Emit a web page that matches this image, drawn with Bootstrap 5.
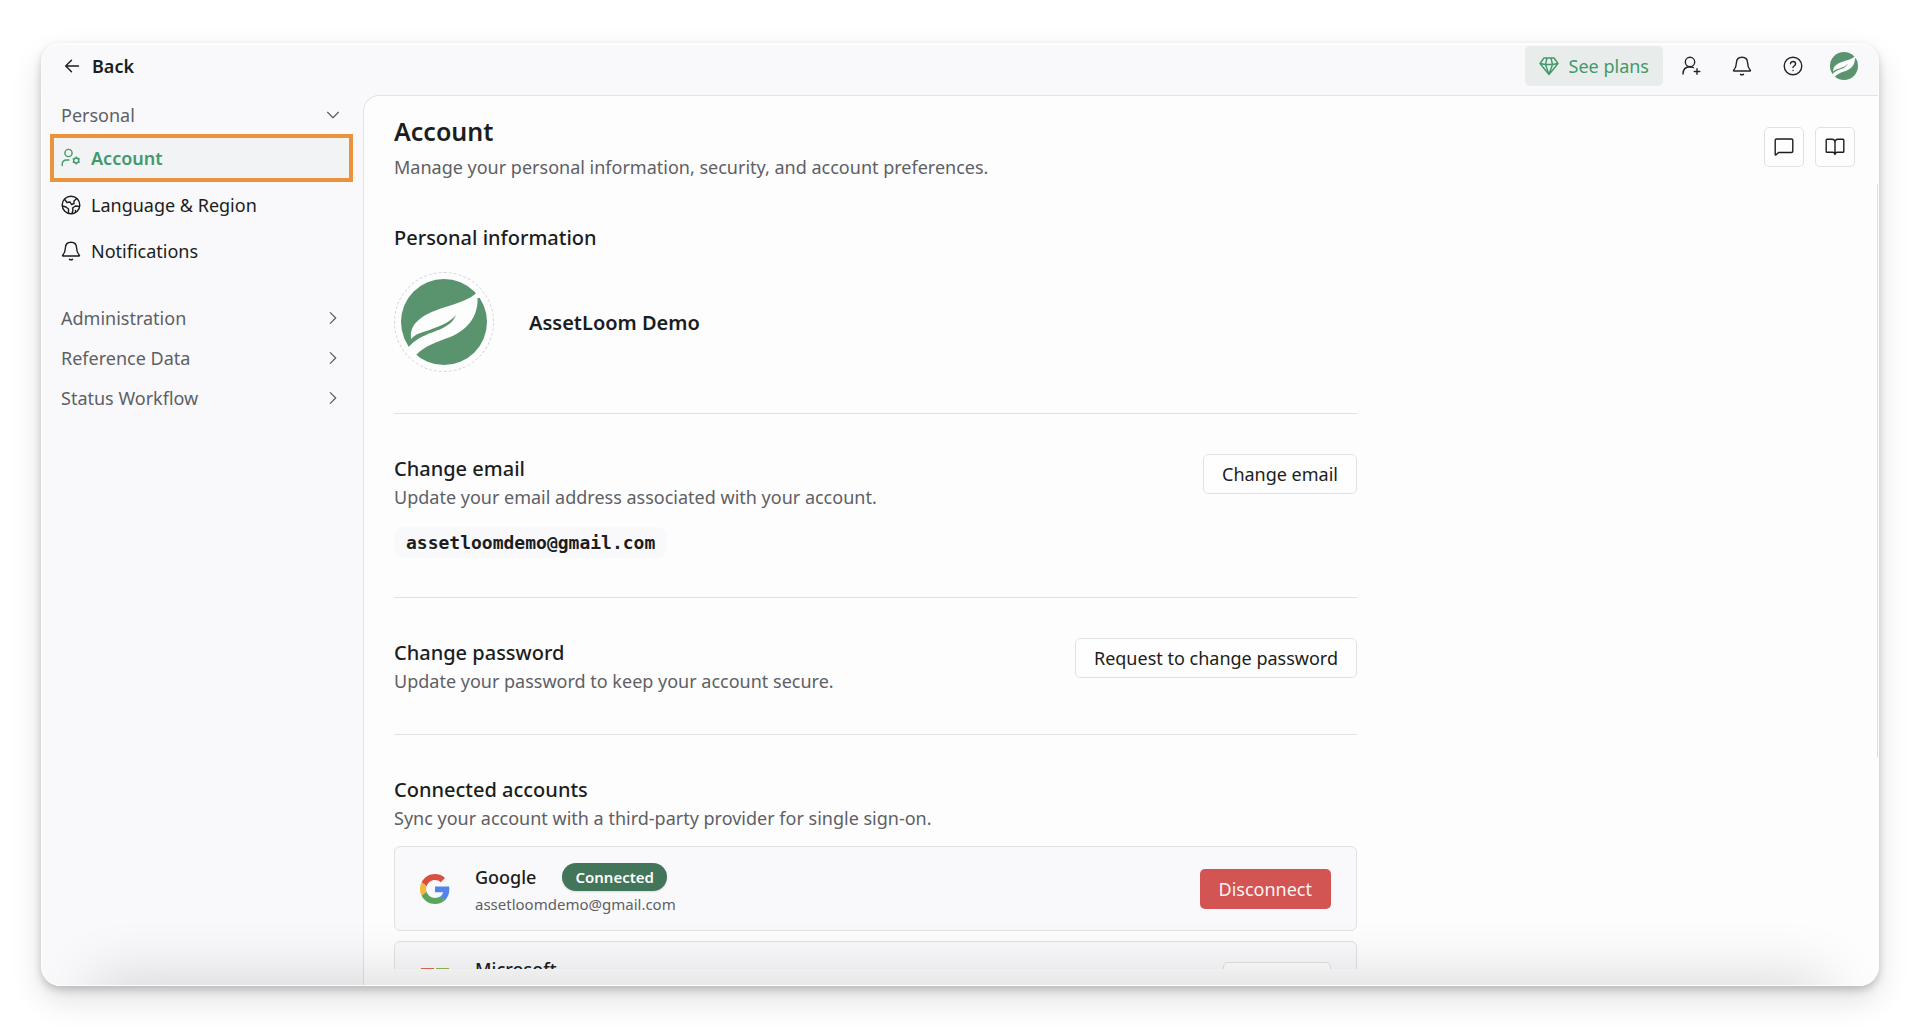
<!DOCTYPE html>
<html lang="en">
<head>
<meta charset="utf-8">
<meta name="viewport" content="width=device-width, initial-scale=1">
<title>Account</title>
<link rel="stylesheet" href="https://cdn.jsdelivr.net/npm/bootstrap@5.3.0/dist/css/bootstrap.min.css">
<style>
  body { font-family: "Noto Sans", sans-serif; font-size: 18px; line-height: 28px; color: #1b1d20; background: #fff; }
  a { color: inherit; text-decoration: none; }
  .ic { width: 20px; height: 20px; flex: none; fill: none; stroke: currentColor; stroke-width: 1.4; stroke-linecap: round; stroke-linejoin: round; }
  .stage { height: 100vh; padding: 43px 41px 41px; }
  .app-window { background: #f9f9fb; border: 1px solid #fdfdfe; border-top-width: 2px; border-radius: 20px; position: relative; overflow: hidden; }
  .window-shadow { border-radius: 20px; box-shadow: 0 4px 8px rgba(0,0,0,.2), 0 14px 32px rgba(0,0,0,.12); }
  .window-shadow, .app-window { height: 100%; }
  .bottom-shade { position: absolute; left: 60px; right: 60px; bottom: -50px; height: 50px; box-shadow: 0 0 60px 8px rgba(0,0,0,.14); pointer-events: none; }
  .topbar { height: 50px; padding: 0 14px 9px 20px; flex: none; }
  .topbar-actions { gap: 11px; margin-left: 8px; }
  .back-link { gap: 10px; font-weight: 600; }
  .window-body { min-height: 0; }
  .btn { --bs-btn-font-size: 18px; --bs-btn-line-height: 28px; --bs-btn-border-radius: 5px; height: 40px; padding: 5px 18px; white-space: nowrap; }
  .btn-plans { --bs-btn-color: #43996a; --bs-btn-bg: #e8eceb; --bs-btn-hover-color: #43996a; --bs-btn-hover-bg: #dfe5e3; padding: 5px 13px; gap: 10px; }
  .btn-outline { --bs-btn-color: #1b1d20; --bs-btn-bg: #fefefe; --bs-btn-border-color: #dfe1e4; --bs-btn-hover-bg: #f3f4f6; --bs-btn-hover-border-color: #dfe1e4; }
  .btn-disconnect { --bs-btn-color: #fdf3f3; --bs-btn-bg: #d25453; --bs-btn-hover-color: #fff; --bs-btn-hover-bg: #bd4645; }
  .btn-square, .btn-bare { width: 40px; padding: 0; display: flex; align-items: center; justify-content: center; }
  .btn-bare { border: 0; }
  .sidebar { width: 321px; flex: none; padding: 0 10px 0 8px; }
  .group-toggle { height: 40px; padding: 0 11px; color: #5d6065; border: 0; background: none; width: 100%; }
  .group-toggle.is-open { height: 39px; }
  .group-toggle .ic { width: 18px; height: 18px; }
  .side-link { height: 46px; padding: 0 7px; gap: 10px; border: 4px solid transparent; }
  .side-link.current { height: 48px; background: #f1f3f5; border-color: #e9933c; color: #43996a; font-weight: 600; }
  .panel { background: #fdfdfd; border: 1px solid #e1e3e6; border-right: 0; border-bottom: 0; border-top-left-radius: 16px; padding: 0 0 16px 30px; min-height: 0; min-width: 0; }
  .scroll-area { overflow: hidden; height: 100%; padding-right: 23px; }
  .content-col { width: 963px; max-width: 100%; }
  .page-title { font-size: 25px; line-height: 38px; font-weight: 600; margin: 0 0 3px; }
  .page-tools { gap: 11px; padding-top: 15px; }
  .section-title { font-size: 20px; line-height: 29px; font-weight: 500; margin: 0; }
  .muted { color: #5d6065; margin: 0; }
  .profile { padding: 42px 0 41px; }
  .profile-row { gap: 35px; padding-top: 20px; }
  .setting { border-top: 1px solid #dfe1e4; padding: 40px 0 39px; }
  .avatar-ring { width: 100px; height: 100px; padding: 6px; border: 1px dashed #d3d6da; border-radius: 50%; }
  .mail-chip { font-family: "DejaVu Sans Mono", monospace; font-weight: 700; font-size: 18px; line-height: 31px; padding: 0 12px; margin-top: 16px; border-radius: 10px; background: #f9f9fb; width: fit-content; }
  .providers { gap: 10px; padding-top: 14px; }
  .provider { border: 1px solid #dfe1e4; border-radius: 6px; background: #f9f9fb; min-height: 82px; padding: 12px 25px; }
  .provider-logo { width: 30px; height: 30px; margin-right: 25px; flex: none; }
  .provider-name { gap: 26px; font-weight: 500; }
  .provider-mail { font-size: 15px; line-height: 27px; color: #5d6065; }
  .pill { font-size: 15px; line-height: 28px; font-weight: 600; color: #fff; background: #43755a; border-radius: 14px; padding: 0 13px; box-shadow: 0 1px 2px rgba(0,0,0,.12); }
  .scroll-thumb { position: absolute; right: 0; top: 139px; width: 1px; height: 61%; background: #dcdddf; }
</style>
</head>
<body>
<svg width="0" height="0" class="position-absolute" aria-hidden="true">
  <symbol id="leaf" viewBox="0 0 100 100">
    <circle cx="50" cy="50" r="50" fill="#5a946f"/>
    <path fill="#fdfdfd" d="M91 13C80 25 65 28 50 33C30 39 8 50 12 70C16 63 26 62 36 58C48 54 57 50 64 42C60 53 48 58 37 62C25 66 15 72 9 79L11 92L15 92C22 81 36 75 50 70C72 63 90 48 89 22L95 22Z"/>
  </symbol>
  <symbol id="bell" viewBox="0 0 20 20"><path d="M10 1.300C6.500 1.300 4.500 3.800 4.400 7C4.300 11 3.300 12.600 1.700 14.200C1.400 14.600 1.500 15 2 15H18C18.500 15 18.600 14.600 18.300 14.200C16.700 12.600 15.700 11 15.600 7C15.500 3.800 13.500 1.300 10 1.300ZM8.500 18.200C9.200 19 10.800 19 11.500 18.200"/></symbol>
  <symbol id="chevron" viewBox="0 0 20 20"><path d="M7 4L13 10L7 16"/></symbol>
</svg>
<div class="stage"><div class="window-shadow"><div class="app-window d-flex flex-column">
  <header class="topbar d-flex align-items-center justify-content-between">
    <a href="#" class="back-link d-flex align-items-center"><svg class="ic" viewBox="0 0 20 20"><path d="M16.500 10H4M9.500 4.200L3.700 10L9.500 15.800"/></svg>Back</a>
    <div class="d-flex align-items-center">
      <button class="btn btn-plans d-flex align-items-center" type="button"><svg class="ic" viewBox="0 0 20 20"><path d="M5 2H15L19 7.500L10 18.500L1 7.500ZM1 7.500L6.500 8.500H13.500L19 7.500M8 2L6.500 8.500L10 18.500L13.500 8.500L12 2"/></svg>See plans</button>
      <div class="topbar-actions d-flex align-items-center">
        <button class="btn btn-bare" type="button" aria-label="Invite user"><svg class="ic" viewBox="0 0 20 20"><circle cx="9" cy="6" r="4.700"/><path d="M2 18C2 13.800 4.500 10.800 9 10.700C10.500 10.700 11.500 11 12.500 11.700M16 12.700V18.300M13.200 15.500H18.800"/></svg></button>
        <button class="btn btn-bare" type="button" aria-label="Notifications"><svg class="ic"><use href="#bell"/></svg></button>
        <button class="btn btn-bare" type="button" aria-label="Help"><svg class="ic" viewBox="0 0 20 20"><circle cx="10" cy="10" r="8.800"/><path d="M7.500 7.800C7.500 4.800 12.600 4.800 12.600 7.900C12.600 9.800 10 9.700 10 11.600M10 14.400V14.500"/></svg></button>
        <button class="btn btn-bare" type="button" aria-label="Profile"><svg width="28" height="28"><use href="#leaf"/></svg></button>
      </div>
    </div>
  </header>
  <div class="window-body d-flex flex-grow-1">
    <nav class="sidebar" aria-label="Settings">
      <button class="group-toggle is-open d-flex align-items-center justify-content-between" type="button" aria-expanded="true">Personal<svg class="ic" viewBox="0 0 20 20"><path d="M4 7L10 13L16 7"/></svg></button>
      <a href="#" class="side-link current d-flex align-items-center" aria-current="page"><svg class="ic" viewBox="0 0 20 20"><circle cx="7.500" cy="5" r="3.600"/><path d="M1.200 17.500V16.500C1.200 13.500 3.200 12 5.500 12H8"/><circle cx="15.200" cy="12.500" r="2.500"/><path d="M15.200 9V9.600M15.200 15.400V16M12.200 10.800L12.700 11.100M17.700 13.900L18.200 14.200M12.200 14.200L12.700 13.900M17.700 11.100L18.200 10.800"/></svg>Account</a>
      <a href="#" class="side-link d-flex align-items-center"><svg class="ic" viewBox="0 0 20 20"><circle cx="10" cy="10" r="8.800"/><path d="M3.500 4.300L6 7.500L9 7L10.500 9.500L13 8.500L13 6L15.800 3.500M1.500 11L5 12L7.500 14V18.200M18.500 11.500L14.500 11L11.500 13L12 15L11 18.500M14.500 15.500V17.300"/></svg>Language &amp; Region</a>
      <a href="#" class="side-link d-flex align-items-center"><svg class="ic"><use href="#bell"/></svg>Notifications</a>
      <div class="pt-4">
        <button class="group-toggle d-flex align-items-center justify-content-between" type="button">Administration<svg class="ic"><use href="#chevron"/></svg></button>
        <button class="group-toggle d-flex align-items-center justify-content-between" type="button">Reference Data<svg class="ic"><use href="#chevron"/></svg></button>
        <button class="group-toggle d-flex align-items-center justify-content-between" type="button">Status Workflow<svg class="ic"><use href="#chevron"/></svg></button>
      </div>
    </nav>
    <main class="panel flex-grow-1"><div class="scroll-area">
      <div class="d-flex justify-content-between align-items-start pt-3">
        <div><h1 class="page-title">Account</h1><p class="muted">Manage your personal information, security, and account preferences.</p></div>
        <div class="page-tools d-flex">
          <button class="btn btn-outline btn-square" type="button" aria-label="Feedback"><svg class="ic" viewBox="0 0 20 20"><path d="M1.200 17.500V3.500Q1.200 2 2.700 2H17.300Q18.800 2 18.800 3.500V14Q18.800 15.500 17.300 15.500H4.500L2.200 17.800Q1.200 18.500 1.200 17.500Z"/></svg></button>
          <button class="btn btn-outline btn-square" type="button" aria-label="Guide"><svg class="ic" viewBox="0 0 20 20"><path d="M10 17.500V5Q10 2.200 7 2.200H2Q1.200 2.200 1.200 3V14.500Q1.200 15.300 2 15.300H7.500Q10 15.300 10 17.500Q10 15.300 12.500 15.300H18Q18.800 15.300 18.800 14.500V3Q18.800 2.200 18 2.200H13Q10 2.200 10 5"/></svg></button>
        </div>
      </div>
      <div class="content-col">
        <section class="profile">
          <h2 class="section-title">Personal information</h2>
          <div class="profile-row d-flex align-items-center">
            <div class="avatar-ring"><svg width="86" height="86" class="d-block"><use href="#leaf"/></svg></div>
            <div class="section-title fw-semibold">AssetLoom Demo</div>
          </div>
        </section>
        <section class="setting d-flex justify-content-between align-items-start">
          <div><h2 class="section-title">Change email</h2><p class="muted">Update your email address associated with your account.</p><div class="mail-chip">assetloomdemo@gmail.com</div></div>
          <button class="btn btn-outline" type="button">Change email</button>
        </section>
        <section class="setting d-flex justify-content-between align-items-start">
          <div><h2 class="section-title">Change password</h2><p class="muted">Update your password to keep your account secure.</p></div>
          <button class="btn btn-outline" type="button">Request to change password</button>
        </section>
        <section class="setting">
          <h2 class="section-title">Connected accounts</h2><p class="muted">Sync your account with a third-party provider for single sign-on.</p>
          <div class="providers d-flex flex-column">
            <div class="provider d-flex align-items-center">
              <svg class="provider-logo" viewBox="0 0 48 48" aria-hidden="true"><path fill="#d9503f" d="M24 9.500c3.540 0 6.710 1.220 9.210 3.600l6.850-6.850C35.900 2.380 30.470 0 24 0 14.620 0 6.510 5.380 2.560 13.220l7.980 6.190C12.430 13.720 17.740 9.500 24 9.500z"/><path fill="#5384ec" d="M46.980 24.550c0-1.570-.15-3.090-.38-4.550H24v9.020h12.940c-.58 2.960-2.260 5.480-4.780 7.180l7.730 6c4.510-4.180 7.090-10.360 7.090-17.650z"/><path fill="#f2b93e" d="M10.530 28.590c-.48-1.450-.76-2.990-.76-4.590s.27-3.140.76-4.590l-7.980-6.190C.92 16.460 0 20.120 0 24c0 3.880.92 7.540 2.560 10.780l7.970-6.190z"/><path fill="#58a65c" d="M24 48c6.480 0 11.930-2.130 15.890-5.810l-7.730-6c-2.150 1.450-4.920 2.300-8.160 2.300-6.260 0-11.570-4.220-13.470-9.910l-7.980 6.190C6.510 42.620 14.620 48 24 48z"/></svg>
              <div class="flex-grow-1 pt-1"><div class="provider-name d-flex align-items-center">Google<span class="pill">Connected</span></div><div class="provider-mail">assetloomdemo@gmail.com</div></div>
              <button class="btn btn-disconnect" type="button">Disconnect</button>
            </div>
            <div class="provider d-flex align-items-center">
              <svg class="provider-logo" viewBox="0 0 30 30" aria-hidden="true"><path fill="#dd6a50" d="M1 1H14V14H1Z"/><path fill="#95b85a" d="M16 1H29V14H16Z"/><path fill="#4aa3e0" d="M1 16H14V29H1Z"/><path fill="#f0bb45" d="M16 16H29V29H16Z"/></svg>
              <div class="flex-grow-1"><div class="provider-name">Microsoft</div><div class="provider-mail">Not connected</div></div>
              <button class="btn btn-outline" type="button">Connect</button>
            </div>
          </div>
        </section>
      </div>
    </div></main>
  </div>
  <div class="scroll-thumb"></div>
  <div class="bottom-shade"></div>
</div></div></div>
<script src="https://cdn.jsdelivr.net/npm/bootstrap@5.3.0/dist/js/bootstrap.bundle.min.js"></script>
</body>
</html>
